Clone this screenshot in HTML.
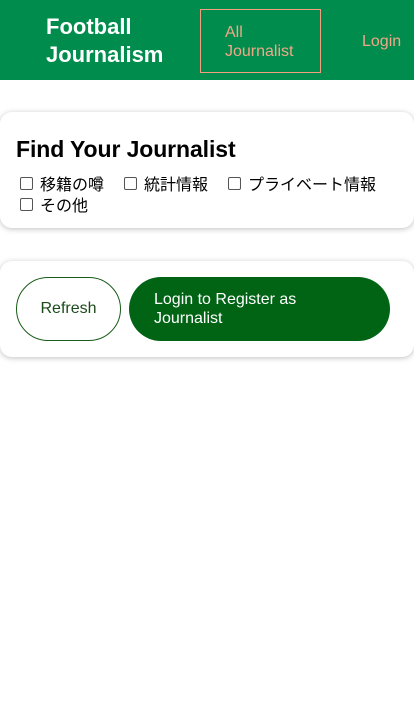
<!DOCTYPE html>
<html><head><meta charset="utf-8"><style>
*{box-sizing:border-box;margin:0;padding:0}
body{width:414px;height:720px;background:#fff;font-family:"Liberation Sans","Noto Sans CJK JP",sans-serif;position:relative;overflow:hidden}
.hdr{position:absolute;left:0;top:0;width:414px;height:80px;background:#008c4d}
.brand{position:absolute;left:46px;top:13px;color:#fff;font-weight:bold;font-size:22px;line-height:28px}
.all{position:absolute;left:200px;top:9px;width:121px;height:64px;border:1px solid #f0a080;color:#f0a888;font-size:16px;line-height:19px;padding:13px 0 0 24px}
.login{position:absolute;left:362px;top:33px;color:#f0a888;font-size:16px}
.card{position:absolute;left:0;width:414px;background:#fff;border-radius:12px;box-shadow:0 1px 6px rgba(0,0,0,.25)}
h2{position:absolute;left:16px;top:24px;font-size:23px;font-weight:bold;color:#000;letter-spacing:-0.1px}
.cb{position:absolute;font-size:16px;color:#000;display:flex;align-items:center}
.cb i{display:inline-block;width:13px;height:13px;border:1px solid #555;border-radius:2px;margin-right:7px}
.btn{position:absolute;top:16px;height:64px;border-radius:32px;font-size:16px;line-height:19px}
</style></head><body>
<div class="hdr">
<div class="brand">Football<br>Journalism</div>
<div class="all">All<br>Journalist</div>
<div class="login">Login</div>
</div>
<div class="card" style="top:112px;height:116px">
<h2>Find Your Journalist</h2>
<div class="cb" style="left:20px;top:59px"><i></i>移籍の噂</div>
<div class="cb" style="left:124px;top:59px"><i></i>統計情報</div>
<div class="cb" style="left:228px;top:59px"><i></i>プライベート情報</div>
<div class="cb" style="left:20px;top:80px"><i></i>その他</div>
</div>
<div class="card" style="top:261px;height:96px">
<div class="btn" style="left:16px;width:105px;border:1px solid #1a5c1a;color:#1a4a1a;text-align:center;line-height:62px">Refresh</div>
<div class="btn" style="left:129px;width:261px;background:#006414;color:#fff;padding:13px 0 0 25px">Login to Register as<br>Journalist</div>
</div>
</body></html>
